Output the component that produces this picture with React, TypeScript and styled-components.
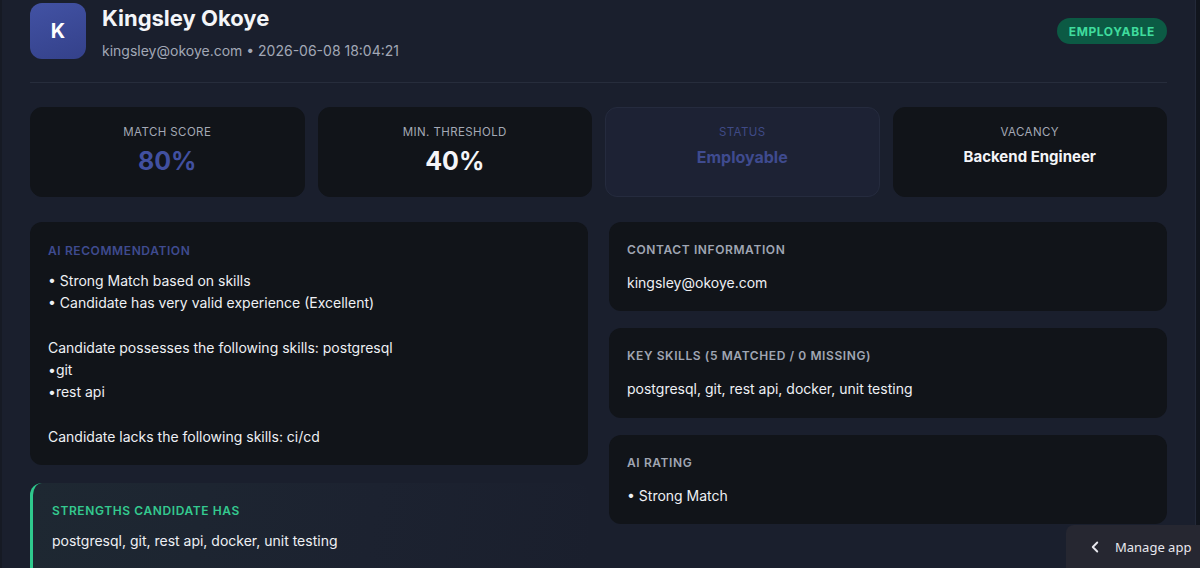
import React from 'react';
import styled, {createGlobalStyle} from 'styled-components';
import {ChevronLeft} from 'lucide-react';

const GlobalStyle = createGlobalStyle`
	html, body {
		margin: 0;
		padding: 0;
		height: 100%;
		overflow: hidden;
		background: #11151d;
	}
	body {
		font-family: Inter, 'Noto Sans', sans-serif;
		color: #f1f3f7;
	}
	#root {
		height: 100%;
	}
`;

const Panel = styled.div`
	box-sizing: border-box;
	height: 100%;
	margin-right: 4px;
	padding: 3px 28px 0 28px;
	background: #1a1f2d;
	border-left: 2px solid #161a24;
	border-right: 1px solid #232939;
`;

const Header = styled.header`
	display: flex;
	justify-content: space-between;
	align-items: flex-start;
	padding-bottom: 23px;
	border-bottom: 1px solid #272d3c;
`;

const Identity = styled.div`
	display: flex;
	gap: 16px;
`;

const Avatar = styled.div`
	width: 56px;
	height: 56px;
	border-radius: 12px;
	background: linear-gradient(160deg, #4252a4, #34418a);
	display: flex;
	align-items: center;
	justify-content: center;
	font-size: 20px;
	font-weight: 700;
	color: #fff;
`;

const Name = styled.h1`
	margin: 0;
	font-size: 22px;
	line-height: 30px;
	font-weight: 700;
	color: #f4f5f8;
`;

const Meta = styled.div`
	margin-top: 9px;
	font-size: 14px;
	color: #a2a8b6;
`;

const Badge = styled.span`
	margin-top: 15px;
	height: 26px;
	padding: 0 12px;
	border-radius: 13px;
	background: #0c5a44;
	color: #3fdc9d;
	font-size: 12px;
	font-weight: 700;
	letter-spacing: 0.6px;
	display: flex;
	align-items: center;
`;

const Stats = styled.section`
	display: grid;
	grid-template-columns: repeat(4, 1fr);
	gap: 13px;
	margin-top: 24px;
`;

const StatCard = styled.div<{$ghost?: boolean}>`
	box-sizing: border-box;
	height: 90px;
	padding-top: 17px;
	border-radius: 12px;
	text-align: center;
	background: ${p => (p.$ghost ? '#1d2234' : '#111419')};
	border: 1px solid ${p => (p.$ghost ? '#252b3e' : '#111419')};
`;

const StatLabel = styled.div<{$muted?: boolean}>`
	font-size: 11.5px;
	letter-spacing: 0.4px;
	text-transform: uppercase;
	color: ${p => (p.$muted ? '#3f4a86' : '#a4a9b5')};
`;

const StatValue = styled.div<{$tone?: string; $size?: number}>`
	margin-top: 6px;
	font-size: ${p => p.$size ?? 25}px;
	line-height: ${p => (p.$size && p.$size < 20 ? '24px' : '32px')};
	font-weight: 700;
	color: ${p => p.$tone ?? '#f4f5f8'};
`;

const Columns = styled.section`
	display: grid;
	grid-template-columns: 558px 1fr;
	gap: 21px;
	margin-top: 25px;
`;

const Stack = styled.div<{$gap: number}>`
	display: flex;
	flex-direction: column;
	gap: ${p => p.$gap}px;
`;

const Card = styled.div<{$compact?: boolean}>`
	padding: ${p => (p.$compact ? '20px 18px 17px' : '21px 18px 17px')};
	border-radius: 12px;
	background: #111419;
`;

const HighlightCard = styled.div`
	padding: 20px 18px 20px 19px;
	border-radius: 12px;
	border-left: 3px solid #2fc98d;
	background: linear-gradient(100deg, #1e2832 0%, #1c2230 60%, #1a1f2d 100%);
	min-height: 80px;
`;

const CardTitle = styled.div<{$tone?: string; $gap?: number}>`
	font-size: 12px;
	line-height: 16px;
	font-weight: 600;
	letter-spacing: 0.6px;
	text-transform: uppercase;
	color: ${p => p.$tone ?? '#a0a6b3'};
	margin-bottom: ${p => p.$gap ?? 11}px;
`;

const CardText = styled.div`
	font-size: 14px;
	line-height: 22.3px;
	color: #eef0f4;
	white-space: pre-wrap;
`;

const ManageApp = styled.button`
	position: fixed;
	right: 0;
	bottom: 0;
	width: 134px;
	height: 43px;
	border: none;
	border-top-left-radius: 8px;
	background: #262731;
	color: #e8e8ee;
	font-family: 'Noto Sans', 'Open Sans', sans-serif;
	font-size: 13px;
	white-space: nowrap;
	display: flex;
	align-items: center;
	gap: 11px;
	padding: 0 0 0 20px;
`;

const recommendation = `• Strong Match based on skills
• Candidate has very valid experience (Excellent)

Candidate possesses the following skills: postgresql
•git
•rest api

Candidate lacks the following skills: ci/cd`;

const skills = 'postgresql, git, rest api, docker, unit testing';

export default function App() {
	return (
		<>
			<GlobalStyle />
			<Panel>
				<Header>
					<Identity>
						<Avatar>K</Avatar>
						<div>
							<Name>Kingsley Okoye</Name>
							<Meta>kingsley@okoye.com • 2026-06-08 18:04:21</Meta>
						</div>
					</Identity>
					<Badge>EMPLOYABLE</Badge>
				</Header>

				<Stats>
					<StatCard>
						<StatLabel>Match Score</StatLabel>
						<StatValue $tone='#4150a0'>80%</StatValue>
					</StatCard>
					<StatCard>
						<StatLabel>Min. Threshold</StatLabel>
						<StatValue>40%</StatValue>
					</StatCard>
					<StatCard $ghost>
						<StatLabel $muted>Status</StatLabel>
						<StatValue $tone='#3f4b8f' $size={16}>Employable</StatValue>
					</StatCard>
					<StatCard>
						<StatLabel>Vacancy</StatLabel>
						<StatValue $size={15}>Backend Engineer</StatValue>
					</StatCard>
				</Stats>

				<Columns>
					<Stack $gap={18}>
						<Card>
							<CardTitle $tone='#3f4b8f'>AI Recommendation</CardTitle>
							<CardText>{recommendation}</CardText>
						</Card>
						<HighlightCard>
							<CardTitle $tone='#34c98f'>Strengths candidate has</CardTitle>
							<CardText>{skills}</CardText>
						</HighlightCard>
					</Stack>
					<Stack $gap={17}>
						<Card $compact>
							<CardTitle $gap={14}>Contact Information</CardTitle>
							<CardText>kingsley@okoye.com</CardText>
						</Card>
						<Card $compact>
							<CardTitle $gap={14}>Key Skills (5 matched / 0 missing)</CardTitle>
							<CardText>{skills}</CardText>
						</Card>
						<Card $compact>
							<CardTitle $gap={14}>AI Rating</CardTitle>
							<CardText>• Strong Match</CardText>
						</Card>
					</Stack>
				</Columns>
			</Panel>
			<ManageApp>
				<ChevronLeft size={18} strokeWidth={2.5} />
				Manage app
			</ManageApp>
		</>
	);
}
